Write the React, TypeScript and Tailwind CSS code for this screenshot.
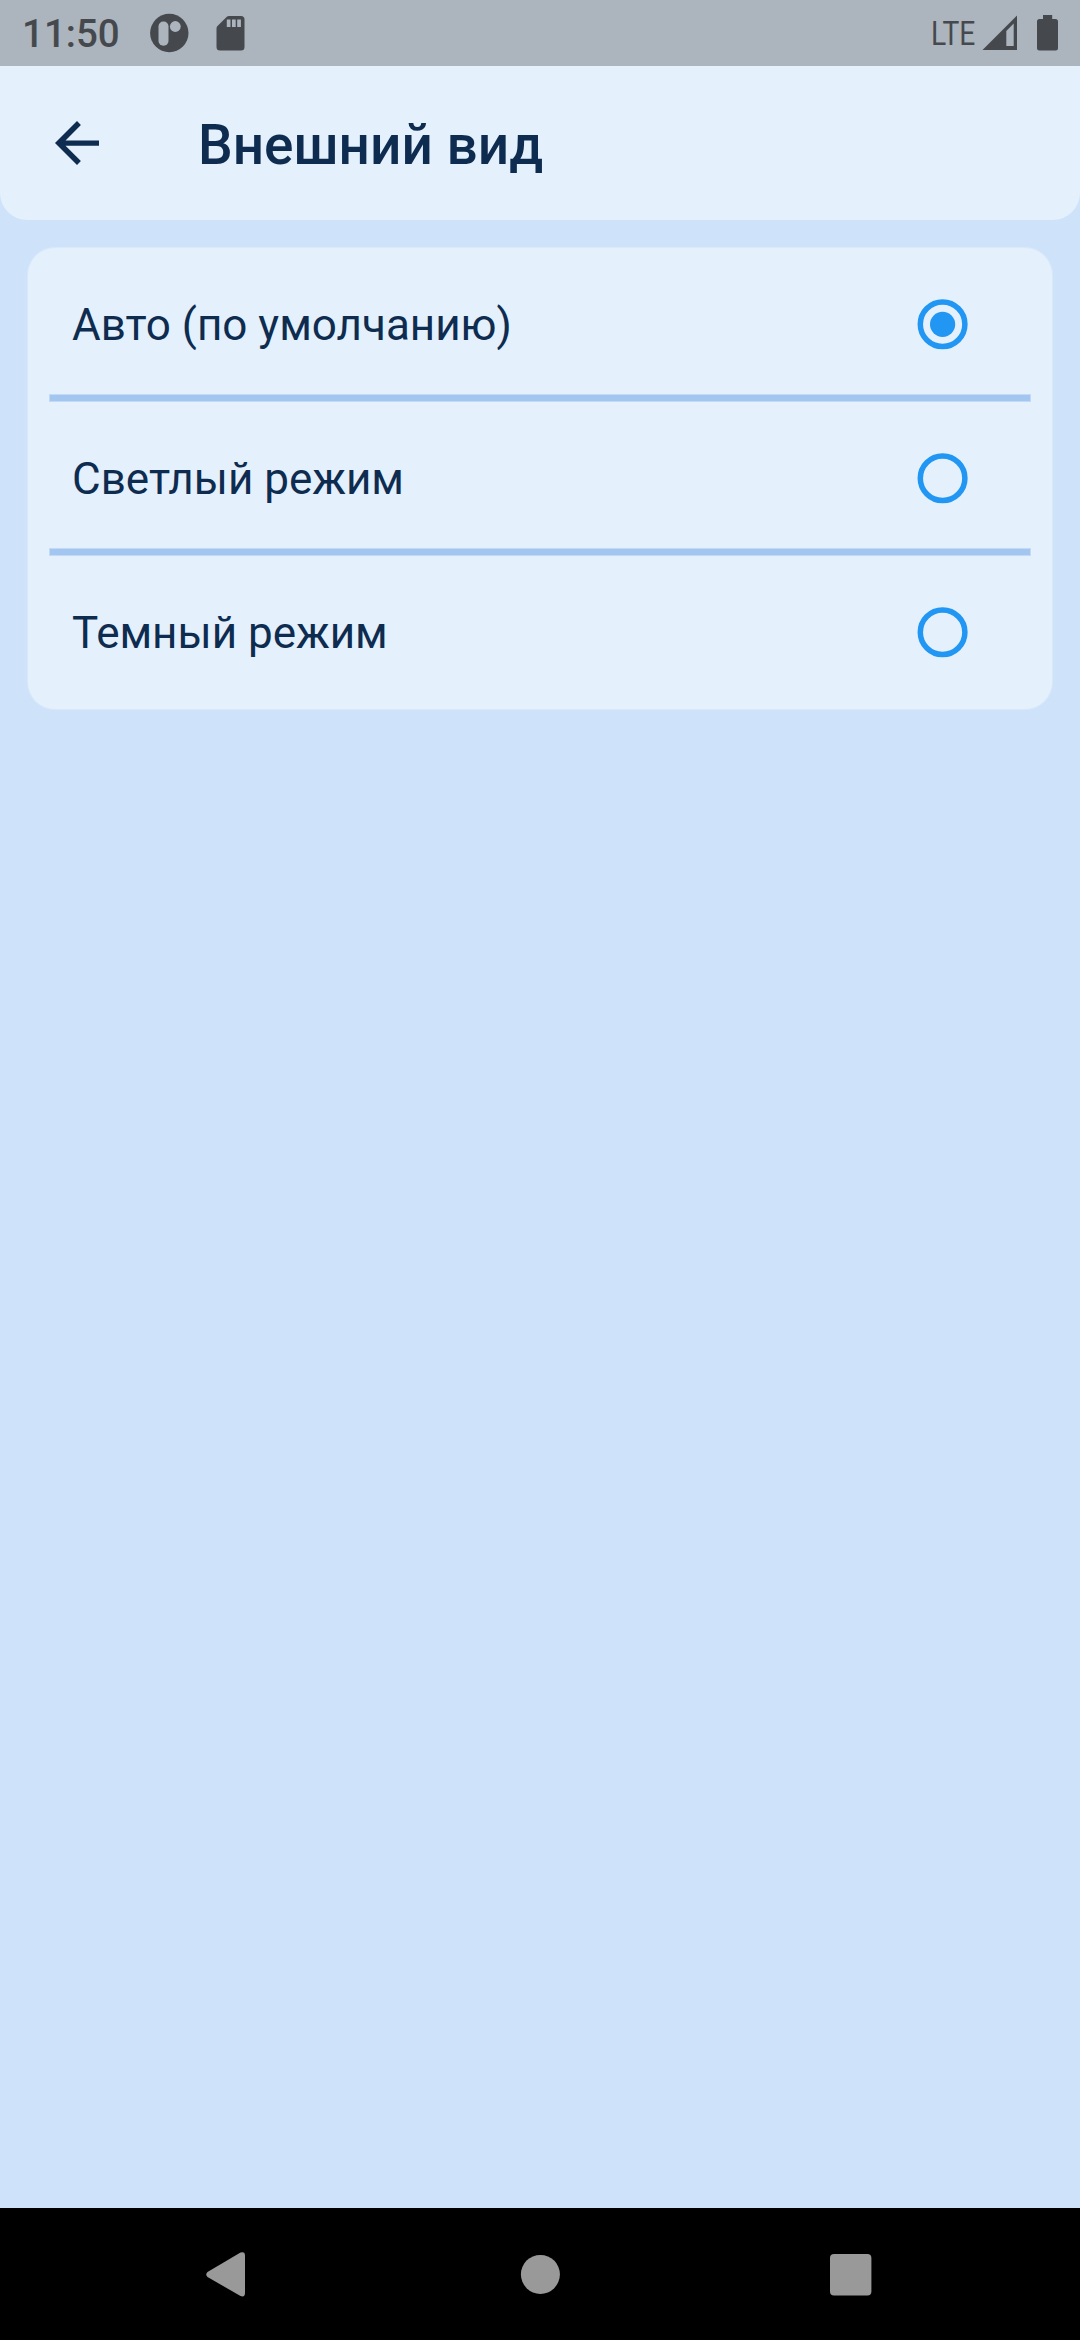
import { useState } from "react";

function StatusBar() {
  return (
    <div className="flex h-[66px] shrink-0 items-start bg-[#acb4be] text-[#45494d]">
      <span className="ml-[22px] mt-[11px] w-[98px] whitespace-nowrap text-[38.5px] font-medium leading-[46px]">11:50</span>
      <svg className="ml-[24px] h-[66px] w-[110px]" viewBox="144 0 110 66" fill="currentColor">
        <circle cx="169.3" cy="33" r="19.2" />
        <rect x="158.5" y="21.5" width="10" height="24.2" rx="4.8" fill="#acb4be" />
        <circle cx="175.3" cy="26.5" r="5.4" fill="#acb4be" />
        <path d="M229 16H241a3.5 3.5 0 0 1 3.5 3.5V47a3.5 3.5 0 0 1-3.5 3.5H220a3.5 3.5 0 0 1-3.5-3.5V28.5q0-1.4 1-2.4L226.600 17q1-1 2.400-1Z" />
        <path fill="#acb4be" d="M226.800 19.500h3.700V27h-3.700zM232 19.500h3.700V27H232zM237.200 19.500h3.700V27h-3.700z" />
      </svg>
      <span className="ml-auto mt-[13px] w-[49px] origin-left translate-x-px scale-x-[0.83] whitespace-nowrap text-[34px] leading-[40px]">LTE</span>
      <svg className="h-[66px] w-[101px]" viewBox="979 0 101 66" fill="currentColor">
        <path fillRule="evenodd" d="M982.500 50 1017 15.500V50ZM1006.300 46H1013.700V23.500L1006.300 30.900Z" />
        <path d="M1043 15h9.200v4h3.300a2.500 2.500 0 0 1 2.500 2.500V48a2.500 2.500 0 0 1-2.500 2.500h-16a2.500 2.500 0 0 1-2.500-2.500V21.500a2.500 2.500 0 0 1 2.500-2.500h3.500Z" />
      </svg>
    </div>
  );
}

function Header() {
  return (
    <header className="flex h-[154px] shrink-0 items-center rounded-b-[27px] bg-[#e4f0fc] pl-[44px]">
      <button aria-label="Назад">
        <svg className="size-[66px]" viewBox="0 0 24 24" fill="currentColor">
          <path d="M20 11.050H7.830l5.590-5.640L12 4l-8 8 8 8 1.410-1.410L7.830 13H20z" />
        </svg>
      </button>
      <h1 className="ml-[88px] mt-[4px] whitespace-nowrap text-[55px] font-medium leading-[64px]">Внешний вид</h1>
    </header>
  );
}

function Radio({ checked }: { checked: boolean }) {
  return (
    <svg className="size-[66px]" viewBox="0 0 66 66">
      <circle cx="32.600" cy="33.300" r="22.300" fill="none" stroke="#2196f3" strokeWidth="5.500" />
      {checked && <circle cx="32.600" cy="33.300" r="12.600" fill="#2196f3" />}
    </svg>
  );
}

const options = ["Авто (по умолчанию)", "Светлый режим", "Темный режим"];

export default function App() {
  const [selected, setSelected] = useState(0);
  return (
    <div className="flex h-[2340px] w-[1080px] flex-col overflow-hidden bg-[#cee2fa] font-['Roboto',sans-serif] text-[#0e2c50]">
      <StatusBar />
      <Header />
      <main className="mx-[27px] mt-[27px] flex h-[463px] flex-col rounded-[28px] border border-[#d9e9fb] bg-[#e4f0fc] px-[21px]">
        {options.map((label, i) => (
          <div key={label} className="flex h-[154px] shrink-0 flex-col">
            <button
              className="flex min-h-0 flex-1 items-start justify-between pl-[23px] pr-[55px] pt-[43px] text-left"
              onClick={() => setSelected(i)}
            >
              <span className="mt-[8px] whitespace-nowrap text-[44px] leading-[52px]">{label}</span>
              <Radio checked={selected === i} />
            </button>
            {i < 2 && <div className="h-[8px] shrink-0 border border-[#c2daf6] bg-[#a2c6f0]" />}
          </div>
        ))}
      </main>
      <nav className="mt-auto h-[132px] shrink-0 bg-black">
        <svg className="h-[132px] w-[1080px]" viewBox="0 0 1080 132" fill="#999999">
          <path d="M207.500 64 240.500 44.500Q245 43 245 47.500V85Q245 89.500 240.500 88L207.500 69Q205 66.500 207.500 64Z" />
          <circle cx="540.400" cy="66.400" r="19.500" />
          <rect x="830" y="46" width="41.400" height="41.400" rx="4" />
        </svg>
      </nav>
    </div>
  );
}
